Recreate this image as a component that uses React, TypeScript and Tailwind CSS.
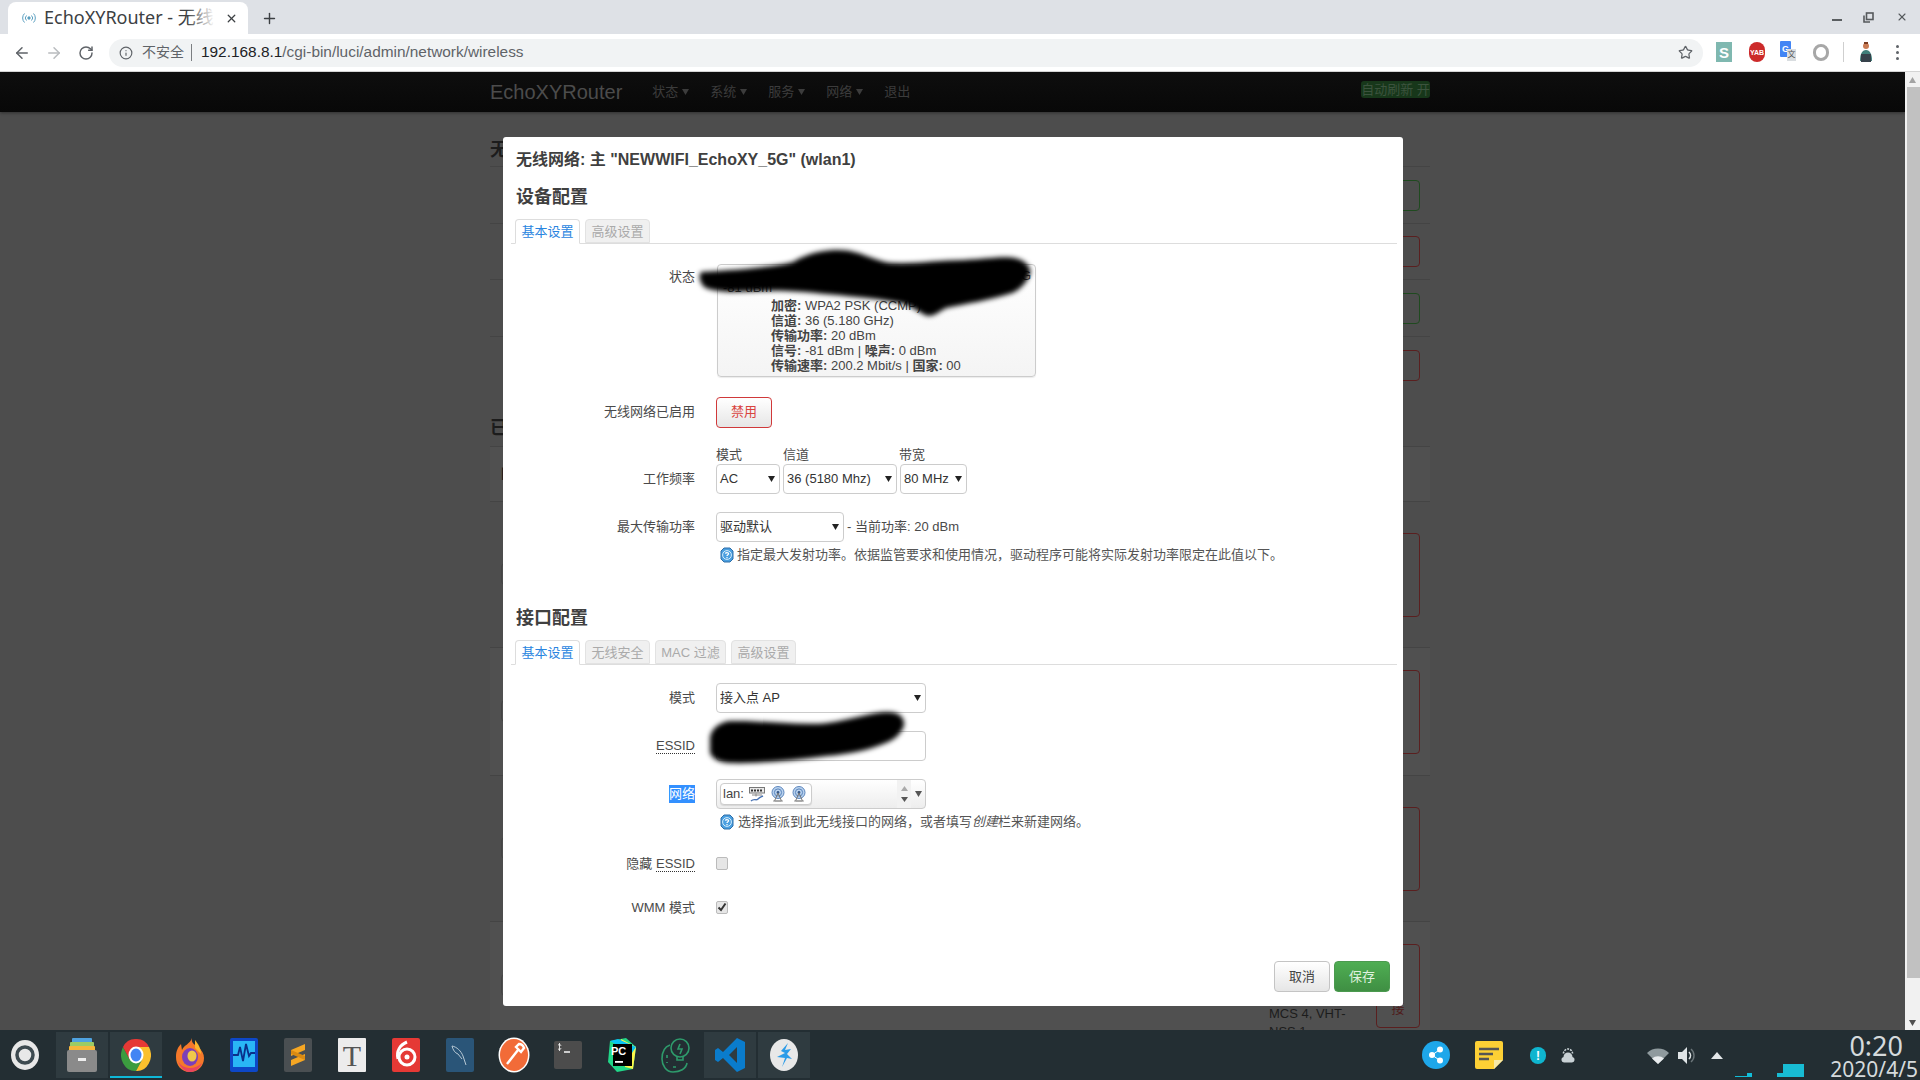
import React from "react";
import { ArrowLeft, ArrowRight, RotateCw, Star, Info, Plus, X } from "lucide-react";

const FONT = 'font-["Liberation_Sans","Noto_Sans_CJK_SC",sans-serif]';

const Arrow = ({ c = "#222" }: { c?: string }) => (
  <svg width="7" height="6" viewBox="0 0 7 6"><path d="M0 0h7L3.5 6z" fill={c} /></svg>
);

const Help = () => (
  <svg width="14" height="16" viewBox="0 0 14 16" className="shrink-0">
    <path d="M4 1h6l3 3v8l-3 3H4l-3-3V4z" fill="#4a9fe0" stroke="#2f6fa8" strokeWidth="1" />
    <circle cx="7" cy="8" r="4.4" fill="none" stroke="#d5ecfb" strokeWidth="1" />
    <path d="M5.4 6.6c.2-1.2 3.2-1.4 3.2.2 0 1-1.6 1-1.6 2.2" fill="none" stroke="#fff" strokeWidth="1.2" />
    <rect x="6.4" y="10" width="1.2" height="1.2" fill="#fff" />
  </svg>
);

const Antenna = () => (
  <svg width="16" height="16" viewBox="0 0 16 16" className="shrink-0">
    <circle cx="8" cy="6.5" r="6" fill="#b9d2ee" stroke="#5c86bd" strokeWidth="1" />
    <circle cx="8" cy="6.5" r="3.6" fill="none" stroke="#5c86bd" strokeWidth="1" />
    <circle cx="8" cy="6.5" r="1.4" fill="#38598a" />
    <path d="M8 7L4.5 15h7z" fill="none" stroke="#777" strokeWidth="1" />
    <path d="M3 15h10" stroke="#999" strokeWidth="1" />
  </svg>
);

const Switch = () => (
  <svg width="16" height="16" viewBox="0 0 16 16" className="shrink-0">
    <rect x="0.5" y="1.5" width="15" height="5.5" fill="#e8e8e8" stroke="#777" />
    <path d="M2 3.5h2v2H2zM5 3.5h2v2H5zM8 3.5h2v2H8zM11 3.5h2v2h-2z" fill="#333" />
    <path d="M7 7.5v3M3 9h10" stroke="#888" />
    <path d="M2 15c3-3 5 0 7-2s3-2 5-3" fill="none" stroke="#4a74b4" strokeWidth="1.4" />
  </svg>
);

const Label = ({ children, h = 30, dy = 0 }: { children: React.ReactNode; h?: number; dy?: number }) => (
  <div className="w-[192px] shrink-0 mr-[21px] flex items-center justify-end text-[13px] leading-[20px] text-[#4a4a4a]" style={{ height: h, paddingTop: dy }}>
    {children}
  </div>
);

const Select = ({ w, text }: { w: number; text: string }) => (
  <div className="h-[30px] flex items-center justify-between pl-[3px] pr-[4px] border border-[#ccc] rounded-[4px] bg-white text-[13px] text-[#333] shrink-0" style={{ width: w }}>
    <span>{text}</span>
    <Arrow />
  </div>
);

const Tabs = ({ items }: { items: [string, number][] }) => (
  <div className="ml-[8px] mr-[6px] mt-[12px] h-[25px] pl-[4px] flex gap-[5px] border-b border-[#ddd]">
    {items.map(([t, w], i) => (
      <div
        key={t}
        style={{ width: w }}
        className={
          i === 0
            ? "h-[25px] flex items-center justify-center rounded-t-[4px] border border-[#ddd] border-b-white bg-white text-[13px] text-[#2a85e0]"
            : "h-[24px] pt-[1px] flex items-center justify-center rounded-t-[4px] border border-[#e2e2e2] bg-[#f0f0f0] text-[13px] text-[#aaa]"
        }
      >
        {t}
      </div>
    ))}
  </div>
);

const Abbr = ({ children }: { children: React.ReactNode }) => (
  <span className="border-b border-dotted border-[#333] leading-[14px]">{children}</span>
);

const StatLine = ({ children }: { children: React.ReactNode }) => (
  <div className="pl-[53px] h-[15px] leading-[15px] whitespace-nowrap">{children}</div>
);

function Modal() {
  return (
    <div className="absolute left-[503px] top-[137px] w-[900px] h-[869px] bg-white rounded-[3px] overflow-hidden">
      <div className="pt-[13px] pl-[13px] text-[16px] leading-[20px] font-bold text-[#404040] whitespace-nowrap">
        无线网络: 主 "NEWWIFI_EchoXY_5G" (wlan1)
      </div>
      <div className="mt-[17px] pl-[13px] text-[18px] leading-[20px] font-bold text-[#404040]">设备配置</div>
      <Tabs items={[["基本设置", 65], ["高级设置", 65]]} />

      <div className="mt-[20px] flex">
        <div className="w-[192px] mr-[22px] pt-[3px] text-right text-[13px] leading-[20px] text-[#4a4a4a]">状态</div>
        <div className="w-[319px] h-[113px] border border-[#ccc] rounded-[4px] bg-gradient-to-b from-white to-[#f4f4f4] text-[13px] text-[#444] shadow-[0_1px_1px_rgba(0,0,0,0.08)]">
          <div className="h-[12px] leading-[22px] pr-[4px] text-right">G</div>
          <div className="h-[15px] mt-[3px] leading-[15px] pl-[5px]">-81 dBm</div>
          <div className="h-[3px]" />
          <StatLine><b>加密:</b> WPA2 PSK (CCMP)</StatLine>
          <StatLine><b>信道:</b> 36 (5.180 GHz)</StatLine>
          <StatLine><b>传输功率:</b> 20 dBm</StatLine>
          <StatLine><b>信号:</b> -81 dBm | <b>噪声:</b> 0 dBm</StatLine>
          <StatLine><b>传输速率:</b> 200.2 Mbit/s | <b>国家:</b> 00</StatLine>
        </div>
      </div>

      <div className="mt-[20px] flex">
        <Label h={29}>无线网络已启用</Label>
        <div className="w-[56px] h-[31px] flex items-center justify-center border border-[#d0393a] rounded-[4px] bg-gradient-to-b from-white to-[#e6e6e6] text-[13px] text-[#d9443f] pb-[1px]">禁用</div>
      </div>

      <div className="mt-[19px] flex h-[16px] ml-[213px] text-[13px] leading-[16px] text-[#4a4a4a]">
        <span className="w-[67px]">模式</span>
        <span className="w-[116px]">信道</span>
        <span>带宽</span>
      </div>
      <div className="mt-[1px] flex">
        <Label>工作频率</Label>
        <Select w={64} text="AC" />
        <div className="w-[3px]" />
        <Select w={114} text="36 (5180 Mhz)" />
        <div className="w-[3px]" />
        <Select w={67} text="80 MHz" />
      </div>

      <div className="mt-[18px] flex">
        <Label>最大传输功率</Label>
        <Select w={128} text="驱动默认" />
        <span className="ml-[3px] self-center text-[13px] text-[#4a4a4a]">- 当前功率: 20 dBm</span>
      </div>

      <div className="mt-[5px] ml-[217px] h-[16px] flex items-center gap-[3px] text-[13px] leading-[16px] text-[#555] whitespace-nowrap">
        <Help />
        <span>指定最大发射功率。依据监管要求和使用情况，驱动程序可能将实际发射功率限定在此值以下。</span>
      </div>

      <div className="mt-[45px] pl-[13px] text-[18px] leading-[20px] font-bold text-[#404040]">接口配置</div>
      <Tabs items={[["基本设置", 65], ["无线安全", 65], ["MAC 过滤", 71], ["高级设置", 65]]} />

      <div className="mt-[18px] flex">
        <Label>模式</Label>
        <Select w={210} text="接入点 AP" />
      </div>

      <div className="mt-[18px] flex">
        <Label><Abbr>ESSID</Abbr></Label>
        <div className="w-[210px] h-[30px] border border-[#ccc] rounded-[4px] bg-white" />
      </div>

      <div className="mt-[18px] flex">
        <Label><span className="bg-[#3390ff] text-white leading-[18px]">网络</span></Label>
        <div className="w-[210px] h-[30px] flex items-center pl-[3px] border border-[#ccc] rounded-[4px] bg-gradient-to-b from-white to-[#ededed]">
          <div className="w-[92px] h-[22px] flex items-center gap-[5px] pl-[2px] border border-[#ccc] rounded-[4px] bg-white text-[13px] text-[#444] shadow-[0_1px_1px_rgba(0,0,0,0.1)]">
            <span>lan:</span>
            <Switch />
            <Antenna />
            <Antenna />
          </div>
          <div className="ml-[85px] w-[14px] h-[28px] flex flex-col items-center justify-between py-[6px] bg-[#f2f2f2]">
            <svg width="7" height="5" viewBox="0 0 7 5"><path d="M0 5h7L3.5 0z" fill="#aaa" /></svg>
            <svg width="7" height="5" viewBox="0 0 7 5"><path d="M0 0h7L3.5 5z" fill="#555" /></svg>
          </div>
          <div className="ml-[4px]"><Arrow c="#555" /></div>
        </div>
      </div>

      <div className="mt-[5px] ml-[217px] h-[16px] flex items-center gap-[4px] text-[13px] leading-[16px] text-[#555] whitespace-nowrap">
        <Help />
        <span>选择指派到此无线接口的网络，或者填写<i>创建</i>栏来新建网络。</span>
      </div>

      <div className="mt-[23px] flex items-center h-[20px]">
        <Label h={20} dy={2}><span>隐藏&nbsp;</span><Abbr>ESSID</Abbr></Label>
        <div className="w-[12px] h-[13px] border border-[#bbb] rounded-[2px] bg-[#e6e6e6]" />
      </div>

      <div className="mt-[24px] flex items-center h-[20px]">
        <Label h={20} dy={2}>WMM 模式</Label>
        <div className="w-[12px] h-[13px] flex items-center justify-center border border-[#bbb] rounded-[2px] bg-[#e6e6e6]">
          <svg width="10" height="10" viewBox="0 0 10 10"><path d="M1.5 5.5l2.5 2.5 4.5-6.5" fill="none" stroke="#333" strokeWidth="2" /></svg>
        </div>
      </div>

      <div className="mt-[44px] mr-[13px] flex justify-end gap-[4px]">
        <div className="w-[56px] h-[31px] flex items-center justify-center border border-[#c4c4c4] rounded-[4px] bg-gradient-to-b from-white to-[#e6e6e6] text-[13px] text-[#444]">取消</div>
        <div className="w-[56px] h-[31px] flex items-center justify-center border border-[#4b9a4f] rounded-[4px] bg-gradient-to-b from-[#4fae53] to-[#3f8f43] text-[13px] text-[#dff0df]">保存</div>
      </div>
    </div>
  );
}

const Scribbles = () => (
  <svg className="absolute left-0 top-0 pointer-events-none" width="1920" height="1080" viewBox="0 0 1920 1080">
    <defs>
      <filter id="scribbleBlur" x="-10%" y="-30%" width="120%" height="160%">
        <feGaussianBlur stdDeviation="2.5" />
      </filter>
    </defs>
    <g filter="url(#scribbleBlur)" fill="#000">
      <path d="M701 272C730 270 770 268 793 262C810 252 825 250 839 250C860 250 875 262 893 263C915 264 940 260 964 260C985 259 1005 256 1014 258C1026 260 1032 268 1030 274C1027 282 1020 290 1012 293C990 300 965 304 946 308C940 311 935 316 928 316C920 314 914 306 900 303C885 300 870 298 857 297C835 295 810 292 786 291C765 290 745 292 729 292C715 291 703 289 702 284C699 280 699 275 701 272Z" />
      <path d="M710 737C712 728 720 722 730 721C760 720 800 726 827 723C850 720 872 712 888 712C898 712 905 717 904 725C902 733 895 739 888 742C870 750 850 754 827 756C795 760 760 764 729 763C718 762 711 758 710 752Z" />
    </g>
  </svg>
);

const RowButton = ({ h, c, mark, text }: { h: number; c: string; mark?: boolean; text?: string }) => (
  <div className="flex items-start justify-between">
    <div className="ml-[11px] mt-[30px]">
      {mark && <div className="w-[24px] h-[22px] border border-[#444] rounded-[4px]" />}
    </div>
    <div className="mr-[10px] w-[44px] rounded-[4px] border flex items-end justify-center text-[13px] leading-[18px] text-[#4f1a1a] pb-[9px]" style={{ height: h, borderColor: c }}>
      {text}
    </div>
  </div>
);

function Background() {
  return (
    <div className="ml-[490px] w-[940px] text-[#1c1c1c] relative">
      <div className="h-[54px] flex items-end pb-[4px] text-[18px] leading-[24px] font-bold">无线概况</div>
      <div className="h-[57px] border-t border-[#444] flex items-center"><div className="w-full"><RowButton h={31} c="#1f4a1f" /></div></div>
      <div className="h-[56px] border-t border-[#444] flex items-center"><div className="w-full"><RowButton h={31} c="#5a1f1f" /></div></div>
      <div className="h-[57px] border-t border-[#444] flex items-center"><div className="w-full"><RowButton h={31} c="#1f4a1f" /></div></div>
      <div className="h-[110px] border-t border-[#444]">
        <div className="h-[56px] flex items-center"><div className="w-full"><RowButton h={31} c="#5a1f1f" /></div></div>
        <div className="h-[54px] flex items-end pb-[7px] text-[18px] leading-[24px] font-bold">已连接站点</div>
      </div>
      <div className="h-[55px] bg-[#505050] border-t border-[#444] flex items-center pl-[11px] text-[13px] font-bold">网络</div>
      <div className="h-[146px] border-t border-[#444] pt-[31px]"><RowButton h={84} c="#5a1f1f" mark /></div>
      <div className="h-[128px] bg-[#505050] border-t border-[#444] pt-[22px]"><RowButton h={84} c="#5a1f1f" mark /></div>
      <div className="h-[146px] border-t border-[#444] pt-[31px]"><RowButton h={84} c="#5a1f1f" mark /></div>
      <div className="h-[109px] bg-[#505050] border-t border-[#444] pt-[22px] relative">
        <RowButton h={84} c="#5a1f1f" mark text="接" />
        <div className="absolute left-[779px] top-[83px] text-[13px] leading-[18px] text-[#1c1c1c] whitespace-nowrap">
          MCS 4, VHT-<br />NSS 1
        </div>
      </div>
    </div>
  );
}

/* ---- dock icons ---- */
const Dock = ({ children, active, under, extra }: { children: React.ReactNode; active?: boolean; under?: boolean; extra?: boolean }) => (
  <div className={`w-[52px] h-[46px] ${extra ? "mr-[5px]" : "mr-[2px]"} flex items-center justify-center relative shrink-0 ${active ? "bg-[#2f3b40]" : ""}`}>
    {children}
    {under && <div className="absolute left-0 right-0 bottom-0 h-[2px] bg-[#0fb8d8]" />}
  </div>
);

const icons: React.ReactNode[] = [
  <svg key="0" width="30" height="32" viewBox="0 0 30 32"><ellipse cx="15" cy="16" rx="14" ry="15" fill="#e8e8e8" /><circle cx="15" cy="16" r="8" fill="none" stroke="#3d4a50" strokeWidth="3.5" /></svg>,
  <svg key="1" width="30" height="34" viewBox="0 0 30 34"><rect x="5" y="0" width="20" height="5" rx="1" fill="#4fa3e0" /><rect x="3" y="4" width="24" height="5" rx="1" fill="#9ccc65" /><rect x="2" y="8" width="26" height="5" rx="1" fill="#f6b73c" /><rect x="0" y="12" width="30" height="22" rx="2" fill="#8a8a8a" /><rect x="11" y="20" width="8" height="3" fill="#eee" /></svg>,
  <svg key="2" width="30" height="34" viewBox="0 0 30 34"><path d="M2 9A14 16 0 0 0 15 33l6-11H9z" fill="#3b9c3f" /><path d="M28 9H15l6 13-6 11A14 16 0 0 0 28 9z" fill="#fbc02d" /><path d="M15 1A14 16 0 0 0 2 9l7 13 6-13H28A14 16 0 0 0 15 1z" fill="#e53935" /><ellipse cx="15" cy="17" rx="7.5" ry="8.5" fill="#fff" /><ellipse cx="15" cy="17" rx="5.5" ry="6.5" fill="#4285f4" /></svg>,
  <svg key="3" width="30" height="36" viewBox="0 0 30 36"><path d="M15 35C6 35 1 28 1 20 1 14 3 10 6 7l1 6c2-5 8-6 10-12-1 5 2 6 6 9 4 3 6 7 6 11 0 8-6 14-14 14z" fill="#f5792a" /><path d="M20 3c3 4 6 8 6 14l-6-6z" fill="#fbb62c" /><ellipse cx="15" cy="20" rx="8" ry="9" fill="#7c3fb8" /><ellipse cx="17" cy="19" rx="4.5" ry="5.5" fill="#f0c84a" /><path d="M3 24c4 8 16 10 24 2-3 7-8 9-12 9-6 0-10-5-12-11z" fill="#e8455e" /></svg>,
  <svg key="4" width="28" height="34" viewBox="0 0 28 34"><rect width="28" height="34" rx="2" fill="#0d47c7" /><rect x="3" y="3" width="22" height="26" fill="#29b6f6" /><path d="M3 17h5l2-8 3 14 3-17 3 12 2-3h4" fill="none" stroke="#0a2f8a" strokeWidth="1.8" /></svg>,
  <svg key="5" width="28" height="34" viewBox="0 0 28 34"><rect width="28" height="34" rx="2" fill="#4a4f52" /><path d="M21 6L7 12v6l14-6zM21 16L7 22v6l14-6z" fill="#f5a623" /><path d="M7 12l14 6v4L7 16z" fill="#d98a12" /></svg>,
  <svg key="6" width="28" height="34" viewBox="0 0 28 34"><rect width="28" height="34" rx="1" fill="#ececec" /></svg>,
  <svg key="7" width="28" height="34" viewBox="0 0 28 34"><rect width="28" height="34" rx="2" fill="#e53935" /><circle cx="15" cy="19" r="8" fill="none" stroke="#fff" strokeWidth="3" /><path d="M15 4c-7 3-11 9-9 17" fill="none" stroke="#fff" strokeWidth="3" /><circle cx="15" cy="19" r="2.5" fill="#fff" /></svg>,
  <svg key="8" width="28" height="34" viewBox="0 0 28 34"><rect width="28" height="34" rx="2" fill="#2a5578" /><path d="M6 8c5 1 9 5 11 10l3 9M6 8c1 4 3 7 6 8l4 5" fill="none" stroke="#b7c8d4" strokeWidth="1" /></svg>,
  <svg key="9" width="32" height="36" viewBox="0 0 32 36"><ellipse cx="16" cy="18" rx="15.5" ry="17.5" fill="#fff" /><ellipse cx="16" cy="18" rx="14" ry="16" fill="#f26b38" /><path d="M9 27L20 13M18 10l5 5 3-4c-1-3-3-4-5-4z" fill="none" stroke="#fff" strokeWidth="2.4" /></svg>,
  <svg key="10" width="28" height="28" viewBox="0 0 28 28"><rect width="28" height="28" rx="2" fill="#4c4c4c" /><path d="M10 11h6" stroke="#eee" strokeWidth="1.6" /><path d="M4 4c2-1 3 0 3 1M4 8c2 1 3 0 3-1M5.5 2v8" stroke="#eee" fill="none" strokeWidth="0.9" /></svg>,
  <svg key="11" width="30" height="36" viewBox="0 0 30 36"><path d="M3 4l16-3 10 9-3 22-16 3-9-10z" fill="#21d789" /><path d="M14 2l15 8-3 22-8-2z" fill="#fcf84a" /><path d="M3 4l8-2 18 8-4 6z" fill="#07c3f2" /><rect x="6" y="7" width="19" height="22" fill="#000" /><rect x="8" y="24" width="8" height="1.8" fill="#fff" /></svg>,
  <svg key="12" width="30" height="36" viewBox="0 0 30 36" fill="none" stroke="#2e9a6b" strokeWidth="1.6"><circle cx="19" cy="11" r="9" /><path d="M16 20v3h6v-3M19 7l-2 5h4l-2 5" /><path d="M9 8C3 10 1 16 1 22s4 13 11 13 13-3 14-9" /><path d="M6 18v3M6 25v1M12 30h3" /></svg>,
  <svg key="13" width="30" height="34" viewBox="0 0 30 34"><path d="M22 0l8 4v26l-8 4L8 20l-5 4-3-2V12l3-2 5 4zM22 9l-8 8 8 8z" fill="#0a7ccc" /></svg>,
  <svg key="14" width="30" height="34" viewBox="0 0 30 34"><ellipse cx="15" cy="17" rx="14" ry="16" fill="#e8e8e8" /><path d="M19 5l-7 8 4 2-8 4 8 1-3 9 5-9 5 1-5-5 4-5-6 1z" fill="#2a9be8" /></svg>,
];

function Taskbar() {
  return (
    <div className="h-[50px] bg-[#232e33] flex items-center relative text-[#d5dadc]">
      <div className="flex items-center ml-[-1px]">
        {icons.map((ic, i) => (
          <Dock key={i} extra={i === 0} active={i === 1 || i === 2 || i === 13 || i === 14} under={i === 2}>
            {ic}
            {i === 6 && <span className="absolute inset-0 flex items-center justify-center text-[30px] font-['Liberation_Serif',serif] text-[#555]">T</span>}
            {i === 11 && <span className="absolute left-[15px] top-[13px] text-[11px] leading-[12px] font-bold text-white">PC</span>}
          </Dock>
        ))}
      </div>
      <div className="absolute left-[1422px] top-[11px] w-[28px] h-[28px] rounded-full bg-[#1ea7ea] flex items-center justify-center">
        <svg width="16" height="18" viewBox="0 0 16 18"><path d="M12 3.5L4 9l8 5.5" stroke="#fff" strokeWidth="1" fill="none" /><circle cx="12" cy="3.5" r="3" fill="#fff" /><circle cx="4" cy="9" r="3" fill="#fff" /><circle cx="12" cy="14.5" r="3" fill="#fff" /></svg>
      </div>
      <div className="absolute left-[1475px] top-[11px]">
        <svg width="28" height="28" viewBox="0 0 28 28"><path d="M2 0h24a2 2 0 0 1 2 2v17l-9 9H2a2 2 0 0 1-2-2V2a2 2 0 0 1 2-2z" fill="#fdd035" /><path d="M19 28v-9h9z" fill="#f7e9a8" /><path d="M4 8h20M4 13h14M4 18h10" stroke="#555" strokeWidth="2.6" /></svg>
      </div>
      <div className="absolute left-[1530px] top-[17px] w-[16px] h-[17px] rounded-full bg-[#0fb5cf] flex items-center justify-center text-white text-[12px] leading-none font-bold">!</div>
      <div className="absolute left-[1561px] top-[18px]">
        <svg width="14" height="15" viewBox="0 0 14 15"><path d="M2.5 5.500a4.500 4.500 0 0 1 9 0" fill="none" stroke="#c9d2d6" strokeWidth="1.600" strokeDasharray="2 1" /><path d="M3 14.500a2.800 2.800 0 0 1-.5-5.500 4.500 4.500 0 0 1 9 0 2.800 2.800 0 0 1-.5 5.500z" fill="#c9d2d6" /></svg>
      </div>
      <div className="absolute left-[1647px] top-[18px]">
        <svg width="22" height="16" viewBox="0 0 22 16"><path d="M0 5a16 16 0 0 1 22 0L11 16z" fill="#8f9a9e" /><path d="M5 10.5a9 9 0 0 1 12 0L11 16z" fill="#e8ecee" /></svg>
      </div>
      <div className="absolute left-[1678px] top-[17px]">
        <svg width="18" height="17" viewBox="0 0 18 17"><path d="M0 5h4l5-5v17l-5-5H0z" fill="#dfe4e6" /><path d="M11 5c2 2 2 5 0 7" stroke="#dfe4e6" strokeWidth="1.6" fill="none" /><path d="M13 2c4 3.5 4 9.500 0 13" stroke="#6b7579" strokeWidth="1.4" fill="none" /></svg>
      </div>
      <div className="absolute left-[1711px] top-[22px]">
        <svg width="12" height="7" viewBox="0 0 12 7"><path d="M0 7L6 0l6 7z" fill="#e3e7e9" /></svg>
      </div>
      <div className="absolute left-[1735px] top-[43px]">
        <svg width="18" height="4" viewBox="0 0 18 4"><path d="M0 3h12V0h5v4H0z" fill="#12bdd8" /></svg>
      </div>
      <div className="absolute left-[1777px] top-[34px]">
        <svg width="27" height="13" viewBox="0 0 27 13"><path d="M0 13V9h6V0h21v13z" fill="#18bcd4" /></svg>
      </div>
      <div className="absolute right-[2px] top-[3px] w-[100px] flex flex-col items-end font-['Noto_Sans',sans-serif] text-[#d5dadc]">
        <span className="text-[27px] leading-[26px] pr-[15px]">0:20</span>
        <span className="text-[21px] leading-[20px] whitespace-nowrap">2020/4/5</span>
      </div>
    </div>
  );
}

export default function App() {
  return (
    <div className={`relative w-[1920px] h-[1080px] overflow-hidden flex flex-col ${FONT}`}>
      {/* tab strip */}
      <div className="h-[34px] bg-[#dee1e6] flex items-end relative shrink-0">
        <div className="ml-[8px] w-[240px] h-[32px] bg-white rounded-t-[8px] flex items-center pl-[14px] relative">
          <svg width="14" height="12" viewBox="0 0 14 12" fill="none" stroke="#5a9fc0" strokeWidth="1">
            <circle cx="7" cy="6" r="1.2" fill="#5a9fc0" />
            <path d="M4.500 3.500a3.500 3.500 0 0 0 0 5M9.500 3.500a3.500 3.500 0 0 1 0 5M2.500 1.500a6.400 6.400 0 0 0 0 9M11.500 1.500a6.400 6.400 0 0 1 0 9" />
          </svg>
          <div className="relative ml-[8px] mb-[2px] w-[171px] overflow-hidden whitespace-nowrap text-[18px] leading-[24px] text-[#3c4043] font-['Noto_Sans','Noto_Sans_CJK_SC',sans-serif]">
            EchoXYRouter - 无线
            <div className="absolute right-0 top-0 h-full w-[28px] bg-gradient-to-r from-transparent to-white" />
          </div>
          <X size={13} strokeWidth={2.4} className="ml-[10px] text-[#3c4043]" />
        </div>
        <Plus size={17} strokeWidth={2} className="ml-[13px] mb-[7px] text-[#3c4043]" />
        <div className="absolute right-0 top-0 h-[34px] flex items-center text-[#55595c]">
          <div className="w-[10px] h-[2px] bg-[#5a5e61] mr-[21px] mt-[6px]" />
          <svg width="11" height="11" viewBox="0 0 11 11" className="mr-[22px]" fill="none" stroke="#55595c" strokeWidth="1.6"><rect x="3.500" y="1" width="6.500" height="6.500" /><path d="M1 3.500V10h6" /></svg>
          <X size={12} strokeWidth={2.2} className="mr-[12px]" />
        </div>
      </div>

      {/* toolbar */}
      <div className="h-[38px] bg-white border-b border-[#d4d4d4] flex items-center shrink-0 relative">
        <ArrowLeft size={18} strokeWidth={2} className="ml-[13px] text-[#5f6368]" />
        <ArrowRight size={18} strokeWidth={2} className="ml-[14px] text-[#b9bcbf]" />
        <RotateCw size={16} strokeWidth={2.2} className="ml-[15px] text-[#5f6368]" />
        <div className="ml-[15px] w-[1594px] h-[28px] rounded-full bg-[#f1f3f4] flex items-center pl-[10px] text-[15.400px] whitespace-nowrap">
          <Info size={14} strokeWidth={2} className="text-[#5f6368]" />
          <span className="ml-[9px] text-[14px] text-[#5f6368]">不安全</span>
          <span className="ml-[7px] mr-[9px] w-[1px] h-[17px] bg-[#7b7e81]" />
          <span className="text-[#202124] mb-[2px]">192.168.8.1</span>
          <span className="text-[#5f6368] mb-[2px]">/cgi-bin/luci/admin/network/wireless</span>
          <Star size={15} strokeWidth={2} className="ml-auto mr-[10px] text-[#5f6368]" />
        </div>
        <div className="absolute left-[1716px] top-[8px] w-[16px] h-[20px] bg-[#7fb8b0] flex items-center justify-center text-white text-[15px] font-bold leading-none">S</div>
        <div className="absolute left-[1749px] top-[8px] w-[16px] h-[20px] rounded-full bg-[#cc2a2a] flex items-center justify-center text-white text-[7px] font-bold leading-none">YAB</div>
        <div className="absolute left-[1780px] top-[7px] w-[16px] h-[22px]">
          <div className="absolute left-0 top-0 w-[11px] h-[16px] bg-[#4285f4] rounded-[1px] text-white text-[9px] font-bold leading-[16px] text-center">G</div>
          <div className="absolute right-0 top-[8px] w-[9px] h-[12px] bg-[#d9dde0] text-[#555] text-[8px] leading-[12px] text-center">文</div>
        </div>
        <div className="absolute left-[1813px] top-[10px] w-[16px] h-[17px] rounded-full border-[3px] border-[#a7a7a7]" />
        <div className="absolute left-[1843px] top-[8px] w-[1px] h-[20px] bg-[#cfcfcf]" />
        <svg className="absolute left-[1856px] top-[6px]" width="20" height="24" viewBox="0 0 20 24">
          <circle cx="10" cy="6" r="3" fill="#c97b54" />
          <path d="M8 2h4v2H8z" fill="#7a3b22" />
          <path d="M4 21c0-7 2-11 6-11s6 4 6 11z" fill="#3f7f7a" />
          <rect x="5" y="14" width="10" height="8" fill="#36424b" />
        </svg>
        <div className="absolute left-[1896px] top-[11px] flex flex-col gap-[3px]">
          <span className="w-[3px] h-[3px] rounded-full bg-[#5f6368]" />
          <span className="w-[3px] h-[3px] rounded-full bg-[#5f6368]" />
          <span className="w-[3px] h-[3px] rounded-full bg-[#5f6368]" />
        </div>
      </div>

      {/* viewport */}
      <div className="h-[958px] flex shrink-0">
        <div className="flex-1 bg-[#4d4d4d] overflow-hidden">
          <div className="h-[40px] bg-gradient-to-b from-[#0e0e0e] to-[#080808] flex items-center relative shadow-[0_1px_3px_rgba(0,0,0,0.4)]">
            <span className="ml-[490px] text-[20px] text-[#4c4c4c]">EchoXYRouter</span>
            <div className="ml-[30px] flex text-[13px] text-[#3c3c3c]">
              {["状态", "系统", "服务", "网络"].map((m) => (
                <span key={m} className="w-[58px] flex items-center gap-[4px]">
                  {m}
                  <Arrow c="#3c3c3c" />
                </span>
              ))}
              <span>退出</span>
            </div>
            <div className="absolute left-[1361px] top-[9px] w-[69px] h-[17px] rounded-[3px] bg-[#17371a] text-[#3c533e] text-[13px] leading-[17px] text-center whitespace-nowrap">自动刷新 开</div>
          </div>
          <Background />
        </div>
        <div className="w-[15px] bg-[#f1f1f1] flex flex-col items-center relative">
          <div className="h-[15px] flex items-center justify-center"><svg width="7" height="6" viewBox="0 0 7 6"><path d="M0 6h7L3.500 0z" fill="#a3a3a3" /></svg></div>
          <div className="ml-[2px] w-[13px] h-[891px] bg-[#c1c1c1]" />
          <div className="mt-auto h-[15px] flex items-center justify-center"><Arrow c="#505050" /></div>
        </div>
      </div>

      <Taskbar />
      <Modal />
      <Scribbles />
    </div>
  );
}
